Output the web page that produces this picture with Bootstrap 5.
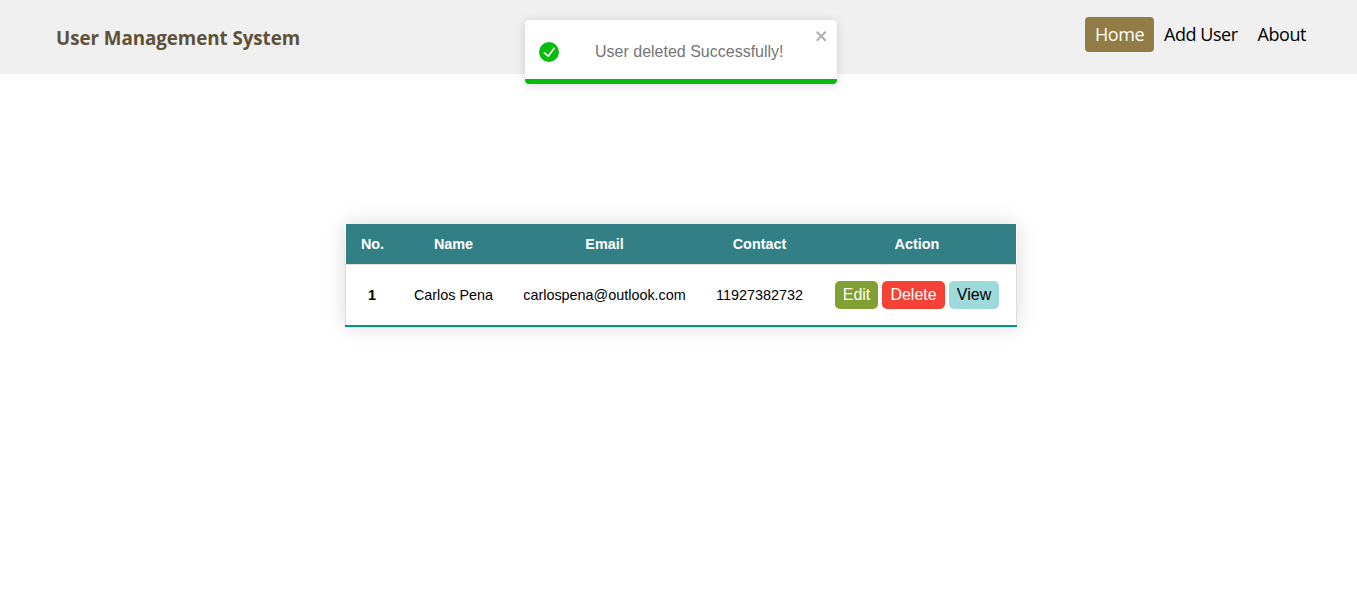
<!DOCTYPE html>
<html lang="en">
<head>
<meta charset="utf-8">
<meta name="viewport" content="width=device-width, initial-scale=1">
<title>User Management System</title>
<link href="https://cdn.jsdelivr.net/npm/bootstrap@5.3.0/dist/css/bootstrap.min.css" rel="stylesheet">
<style>
body{font-family:"Liberation Sans",Arial,sans-serif;color:#000;background:#fff}
.topbar{height:74px;background:#f0f0f0;font-family:"Open Sans","Noto Sans",sans-serif;padding:17px 41px 0 56px}
.brand-title{font-size:18.8px;font-weight:700;color:#5f5138;line-height:26px;margin:8px 0 0;letter-spacing:-.06px}
.topbar .nav-link{height:35px;padding:0 10px;line-height:35px;font-size:18px;letter-spacing:-.46px;color:#000;border-radius:4px;white-space:nowrap}
.topbar .nav-link.active{background:#917c46;color:#fff}
.users{width:672px;margin-top:150px;table-layout:fixed;border-collapse:separate;border-spacing:0;font-size:14.4px;text-align:center;box-shadow:0 0 20px rgba(0,0,0,.15)}
.users thead th{height:40px;padding:2px 0 0 1px;background:#327f86;color:#fff;background-clip:padding-box}
.users thead th:first-child{border-left:1px solid #fff}
.users thead th:last-child{border-right:1px solid #fff}
.users tbody>tr>*{height:63px;padding:2px 0 0 1px;background:#fff;border-top:1px solid #ddd;border-bottom:2px solid #009879}
.users tbody>tr>:first-child{box-shadow:inset 1px 0 #ddd}
.users tbody>tr>:last-child{padding:0;box-shadow:inset -1px 0 #ddd}
.act{height:28px;padding:0;font-size:16px;line-height:26px;border:0;border-radius:5px;color:#fff}
.act-edit{width:43px;background:#80a033}
.act-delete{width:63px;background:#f44336}
.act-view{width:50px;background:#9fdadb;color:#000}
.notice{left:525px;top:20px;width:312px;height:64px;background:#fff;border-radius:4px;overflow:hidden;color:#757575;font-size:16px;padding-left:14px;box-shadow:0 1px 10px rgba(0,0,0,.1),0 2px 15px rgba(0,0,0,.05)}
.notice-text{margin-left:36px;line-height:24px}
.notice-close{top:8px;right:8px;padding:0;border:0;background:none;color:#000;opacity:.3;line-height:0}
.notice-progress{height:5px;background:#07bc0c}
</style>
</head>
<body class="min-vh-100">
<header class="topbar d-flex justify-content-between align-items-start">
  <h1 class="brand-title">User Management System</h1>
  <nav class="nav flex-nowrap">
    <a class="nav-link active" href="#">Home</a>
    <a class="nav-link" href="#">Add User</a>
    <a class="nav-link" href="#">About</a>
  </nav>
</header>
<main class="d-flex justify-content-center ps-1 pb-5">
  <table class="users">
    <colgroup><col style="width:54px"><col style="width:109px"><col style="width:193px"><col style="width:117px"><col style="width:199px"></colgroup>
    <thead><tr><th>No.</th><th>Name</th><th>Email</th><th>Contact</th><th>Action</th></tr></thead>
    <tbody>
      <tr>
        <th scope="row">1</th><td>Carlos Pena</td><td>carlospena@outlook.com</td><td>11927382732</td>
        <td><div class="d-flex gap-1 justify-content-center"><button class="act act-edit">Edit</button><button class="act act-delete">Delete</button><button class="act act-view">View</button></div></td>
      </tr>
    </tbody>
  </table>
</main>
<div class="notice position-absolute d-flex align-items-center" role="alert">
  <svg width="20" height="20" viewBox="0 0 24 24" fill="#07bc0c"><path d="M12 0a12 12 0 1012 12A12.014 12.014 0 0012 0zm6.927 8.2l-6.845 9.289a1.011 1.011 0 01-1.43.188l-4.888-3.908a1 1 0 111.25-1.562l4.076 3.261 6.227-8.451a1 1 0 111.61 1.183z"/></svg>
  <div class="notice-text">User deleted Successfully!</div>
  <button class="notice-close position-absolute" aria-label="close"><svg width="14" height="16" viewBox="0 0 14 16" fill="currentColor"><path fill-rule="evenodd" d="M7.71 8.23l3.75 3.75-1.48 1.48-3.75-3.75-3.75 3.75L1 11.98l3.75-3.75L1 4.48 2.48 3l3.75 3.75L9.98 3l1.48 1.48-3.75 3.75z"/></svg></button>
  <div class="notice-progress position-absolute bottom-0 start-0 w-100"></div>
</div>
<script src="https://cdn.jsdelivr.net/npm/bootstrap@5.3.0/dist/js/bootstrap.bundle.min.js"></script>
</body>
</html>
